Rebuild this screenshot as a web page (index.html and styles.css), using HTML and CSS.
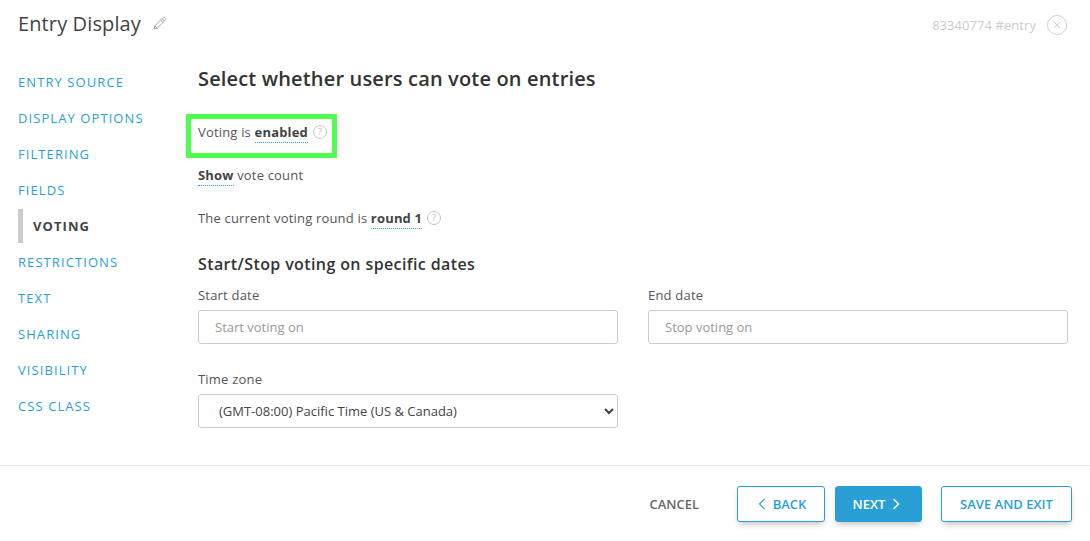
FILE: index.html
```html
<!DOCTYPE html>
<html lang="en">
<head>
<meta charset="utf-8">
<title>Entry Display</title>
<link rel="stylesheet" href="styles.css">
</head>
<body>
<div class="page">
  <header class="header">
    <div class="title-group">
      <h1 class="title">Entry Display</h1>
      <svg class="pencil" viewBox="0 0 14 14" width="14" height="14" fill="none" stroke="#a8a8a8" stroke-width="1"><path d="M1 13l.8-3.2L10.2 1.4a1 1 0 0 1 1.4 0l1 1a1 1 0 0 1 0 1.4L4.2 12.2z"/><path d="M9 2.6l2.4 2.4M7.6 4l2.4 2.4M1.8 9.8l2.4 2.4"/></svg>
    </div>
    <div class="meta">
      <span class="meta-id">83340774 #entry</span>
      <svg class="close" viewBox="0 0 20 20" width="20" height="20" fill="none" stroke="#cfcfcf" stroke-width="1"><circle cx="10" cy="10" r="9.5"/><path d="M6.8 6.8l6.4 6.4M13.2 6.8l-6.4 6.4"/></svg>
    </div>
  </header>
  <div class="body">
    <nav class="nav">
      <a class="nav-item">ENTRY SOURCE</a>
      <a class="nav-item">DISPLAY OPTIONS</a>
      <a class="nav-item">FILTERING</a>
      <a class="nav-item">FIELDS</a>
      <a class="nav-item active">VOTING</a>
      <a class="nav-item">RESTRICTIONS</a>
      <a class="nav-item">TEXT</a>
      <a class="nav-item">SHARING</a>
      <a class="nav-item">VISIBILITY</a>
      <a class="nav-item">CSS CLASS</a>
    </nav>
    <main class="content">
      <h2 class="heading">Select whether users can vote on entries</h2>
      <div class="setting first">
        <span class="highlight"></span>
        Voting is <b class="toggle">enabled</b>
        <svg class="help" viewBox="0 0 14 14" width="14" height="14"><circle cx="7" cy="7" r="6.5" fill="none" stroke="#c4c4c4"/><text x="7" y="10" text-anchor="middle" class="help-q">?</text></svg>
      </div>
      <div class="setting second"><b class="toggle">Show</b> vote count</div>
      <div class="setting third">The current voting round is <b class="toggle">round 1</b>
        <svg class="help" viewBox="0 0 14 14" width="14" height="14"><circle cx="7" cy="7" r="6.5" fill="none" stroke="#c4c4c4"/><text x="7" y="10" text-anchor="middle" class="help-q">?</text></svg>
      </div>
      <h3 class="subheading">Start/Stop voting on specific dates</h3>
      <div class="date-row">
        <label class="field">
          <span class="label">Start date</span>
          <input class="input" type="text" placeholder="Start voting on">
        </label>
        <label class="field">
          <span class="label">End date</span>
          <input class="input" type="text" placeholder="Stop voting on">
        </label>
      </div>
      <label class="field tz">
        <span class="label">Time zone</span>
        <select class="input select"><option>(GMT-08:00) Pacific Time (US &amp; Canada)</option></select>
      </label>
    </main>
  </div>
  <footer class="footer">
    <span class="cancel">CANCEL</span>
    <button class="btn back"><svg viewBox="0 0 8 12" width="8" height="12" fill="none" stroke="currentColor" stroke-width="1.2"><path d="M6.5 1L1.5 6l5 5"/></svg>BACK</button>
    <button class="btn next">NEXT<svg viewBox="0 0 8 12" width="8" height="12" fill="none" stroke="currentColor" stroke-width="1.4"><path d="M1.5 1l5 5-5 5"/></svg></button>
    <button class="btn save">SAVE AND EXIT</button>
  </footer>
</div>
</body>
</html>
```

FILE: styles.css
```css
* { box-sizing: border-box; }
html, body { margin: 0; padding: 0; background: #fff; }
body { font-family: "Open Sans", "Liberation Sans", sans-serif; color: #444; overflow: hidden; }
.page { width: 1090px; height: 541px; display: flex; flex-direction: column; }

.header { height: 62px; padding: 9px 18px 0; display: flex; justify-content: space-between; align-items: flex-start; }
.title-group { display: flex; align-items: center; gap: 12px; height: 30px; }
.title { margin: 0; font-size: 20px; font-weight: 400; color: #444; line-height: 30px; letter-spacing: 0.12px; }
.pencil { margin-top: -3px; }
.meta { display: flex; align-items: center; gap: 11px; height: 32px; padding-right: 5px; }
.meta-id { font-size: 13px; color: #ccc; letter-spacing: 0.06px; }

.body { display: flex; flex: 1; min-height: 0; }
.nav { width: 180px; padding: 2px 0 0 18px; display: flex; flex-direction: column; flex: none; }
.nav-item { height: 36px; line-height: 36px; font-size: 13px; letter-spacing: 1.08px; color: #2a9fd6; white-space: nowrap; }
.nav-item.active { position: relative; padding-left: 15px; font-weight: 700; color: #444; }
.nav-item.active::before { content: ""; position: absolute; left: 0; top: 1px; width: 5px; height: 34px; background: #ccc; }

.content { flex: 1; padding-left: 18px; font-size: 13px; }
.heading { margin: 0; font-size: 20px; line-height: 34px; font-weight: 600; color: #333; letter-spacing: 0.16px; }
.setting { position: relative; line-height: 20px; color: #555; letter-spacing: 0.18px; display: block; }
.setting.first { margin-top: 26px; }
.setting.second { margin-top: 23px; }
.setting.third { margin-top: 23px; }
.highlight { position: absolute; left: -12px; top: -8px; width: 151px; height: 44px; border: 5px solid #4eff4e; }
.toggle { font-weight: 700; color: #444; border-bottom: 1px dotted #2a9fd6; padding-bottom: 1px; }
.help { vertical-align: -2px; margin-left: 1px; }
.help-q { font-family: "Open Sans", sans-serif; font-size: 9px; fill: #b5b5b5; }

.subheading { margin: 25px 0 0; font-size: 16px; line-height: 22px; font-weight: 600; color: #333; letter-spacing: 0.39px; }
.date-row { display: flex; gap: 30px; margin-top: 10px; }
.field { display: block; width: 420px; }
.label { display: block; font-size: 13px; font-weight: 500; line-height: 20px; color: #555; margin-bottom: 5px; letter-spacing: 0.2px; }
.input { display: block; width: 100%; height: 34px; border: 1px solid #ccc; border-radius: 3px; padding: 0 16px; font-family: inherit; font-size: 13px; color: #555; background: #fff; outline: none; }
.input::placeholder { color: #999; opacity: 1; }
.tz { margin-top: 25px; }
.select { padding-left: 16px; color: #444; }

.footer { flex: none; height: 76px; border-top: 1px solid #e6e6e6; padding: 20px 18px 0 0; display: flex; justify-content: flex-end; align-items: flex-start; }
.cancel { font-size: 13px; font-weight: 600; color: #666; line-height: 37px; margin-right: 38px; }
.btn { height: 36px; border: 1px solid #2a9fd6; border-radius: 3px; background: #fff; color: #2a9fd6; font-family: inherit; font-size: 13px; font-weight: 600; padding: 0; display: flex; align-items: center; justify-content: center; box-shadow: 0 4px 6px -2px rgba(0,0,0,.25); }
.back { width: 88px; gap: 7px; padding-left: 2px; margin-right: 10px; }
.next { width: 87px; gap: 7px; padding-right: 4px; background: #2a9fd6; color: #fff; margin-right: 19px; }
.save { width: 131px; }
```
